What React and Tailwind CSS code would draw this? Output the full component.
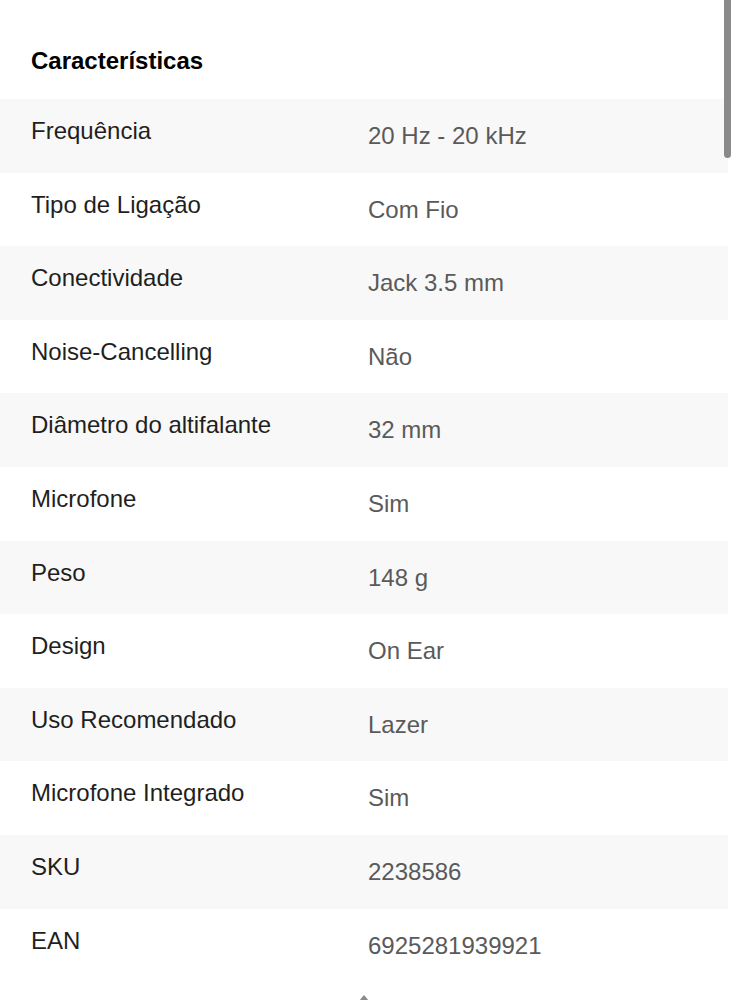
import React from 'react';

const specs = [
  { label: 'Frequência', value: '20 Hz - 20 kHz' },
  { label: 'Tipo de Ligação', value: 'Com Fio' },
  { label: 'Conectividade', value: 'Jack 3.5 mm' },
  { label: 'Noise-Cancelling', value: 'Não' },
  { label: 'Diâmetro do altifalante', value: '32 mm' },
  { label: 'Microfone', value: 'Sim' },
  { label: 'Peso', value: '148 g' },
  { label: 'Design', value: 'On Ear' },
  { label: 'Uso Recomendado', value: 'Lazer' },
  { label: 'Microfone Integrado', value: 'Sim' },
  { label: 'SKU', value: '2238586' },
  { label: 'EAN', value: '6925281939921' },
];

const App = () => {
  return (
    <div className="relative w-[736px] h-[1000px] overflow-hidden bg-white font-['Liberation_Sans',Arial,sans-serif]">
      {/* Scrollbar */}
      <div className="absolute top-0 left-[724px] w-[7px] h-[158px] rounded-b-full bg-[#8a8a8a]" />

      <div className="w-[728px]">
        {/* Title */}
        <div className="h-[99px] pt-[46px] pl-[31px]">
          <h2 className="text-[24px] leading-[29px] font-bold text-black">Características</h2>
        </div>

        {/* Spec rows */}
        <div>
          {specs.map((spec, index) => (
            <div
              key={spec.label}
              className={`flex h-[73.6px] ${index % 2 === 0 ? 'bg-[#f8f8f8]' : 'bg-white'}`}
            >
              <div className="w-[368px] shrink-0 pl-[31px] pt-[17px] text-[24px] leading-[29px] text-[#1f1f1f]">
                {spec.label}
              </div>
              <div className="pt-[22px] text-[24px] leading-[29px] text-[#5a5a5a]">
                {spec.value}
              </div>
            </div>
          ))}
        </div>

        {/* Scroll to top */}
        <div className="flex justify-center pt-[12px]">
          <svg width="14" height="14" viewBox="0 0 14 14">
            <path d="M7 1 L12 7 L2 7 Z" fill="#8a8a8a" />
          </svg>
        </div>
      </div>
    </div>
  );
};

export default App;
